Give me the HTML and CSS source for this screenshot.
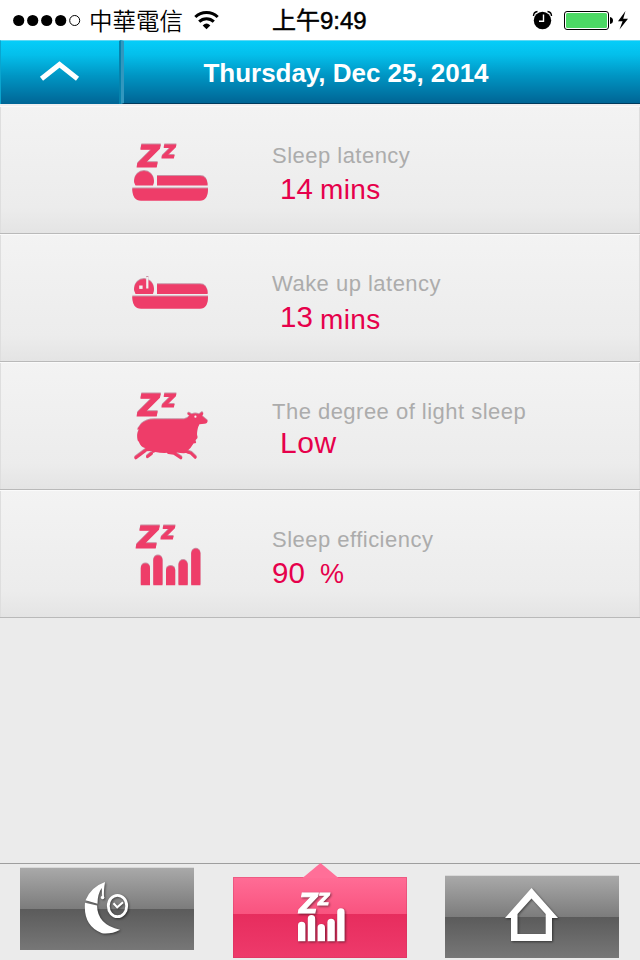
FILE: index.html
```html
<!DOCTYPE html>
<html lang="en">
<head>
    <meta charset="UTF-8">
    <meta name="viewport" content="width=device-width, initial-scale=1.0">
    <title>Sleep Report</title>
    <link rel="stylesheet" href="styles.css">
</head>
<body>

    <!-- Status bar -->
    <div class="status-bar">
        <div class="status-left">
            <svg class="signal" width="70" height="40" viewBox="0 0 70 40">
                <circle cx="5.7" cy="20.5" r="5.6"/>
                <circle cx="19.7" cy="20.5" r="5.6"/>
                <circle cx="33.7" cy="20.5" r="5.6"/>
                <circle cx="47.7" cy="20.5" r="5.6"/>
                <circle cx="61.7" cy="20.5" r="5" fill="none" stroke="#000" stroke-width="1"/>
            </svg>
            <span class="carrier" lang="zh-TW">中華電信</span>
            <svg width="26" height="40" viewBox="0 0 26 40" fill="none" stroke="#000" stroke-width="3">
                <path d="M1.3 17 A16 16 0 0 1 23.7 17"/>
                <path d="M5.2 21.6 A10.5 10.5 0 0 1 19.8 21.6"/>
                <path d="M8.7 25.4 Q12.5 21.8 16.3 25.4 L12.5 29.2 Z" fill="#000" stroke="none"/>
            </svg>
        </div>
        <div class="status-time" lang="zh-TW">上午9:49</div>
        <div class="status-right">
            <svg width="99" height="40" viewBox="-1 0 99 40">
                <circle cx="10.5" cy="20.5" r="8.7"/>
                <path d="M1.5 16 Q1.5 12 5.5 11.5 M15.5 11.5 Q19.5 12 19.5 16" fill="none" stroke="#000" stroke-width="1.4"/>
                <path d="M11.5 14.5 V21.3 H7" fill="none" stroke="#fff" stroke-width="1.4"/>
                <rect x="32.5" y="11.5" width="44" height="18" rx="2.5" fill="#fff" stroke="#000"/>
                <rect x="34" y="13" width="41" height="15" rx="1.5" fill="#4cd964"/>
                <path d="M78 17 Q81 17.5 81 20.5 Q81 23.5 78 24 Z"/>
                <path d="M93.5 11 L86 21.2 H90.6 L87.5 29.5 L96 18.8 H91.2 Z"/>
            </svg>
        </div>
    </div>

    <!-- Header -->
    <div class="header">
        <div class="header-button">
            <svg width="118" height="63" viewBox="0 0 118 63">
                <path d="M40.5 37.7 L58.5 23.5 L76.5 37.7" fill="none" stroke="#fff" stroke-width="5"/>
            </svg>
        </div>
        <h1>Thursday, Dec 25, 2014</h1>
    </div>

    <!-- Results -->
    <div class="row">
        <svg class="icon" width="100" height="127" viewBox="0 0 100 127">
            <text class="z-big" x="18" y="60.5">Z</text>
            <text class="z-small" x="42.5" y="51.5">Z</text>
            <path d="M15.5 79.5 Q14 77 14 75 A10 10 0 0 1 34 75 Q34 77 33 79.5 Z"/>
            <path d="M37 70 H80 Q87.5 70 87.7 79.5 H37 Z"/>
            <path d="M12.3 82.5 H88 Q88 94.7 80 94.7 H21 Q12.3 94.7 12.3 82.5 Z"/>
        </svg>
        <div class="info">
            <div class="label">Sleep latency</div>
            <div class="value"><span class="number indent">14</span><span class="unit">mins</span></div>
        </div>
    </div>
    <div class="row">
        <svg class="icon" width="100" height="127" viewBox="0 0 100 127">
            <path d="M15.5 60 Q14 57 14 55 A10 10 0 0 1 34 55 Q34 57 33 60 Z"/>
            <rect x="26.2" y="43" width="2.2" height="11.5" fill="#f0f0f0"/>
            <rect x="19.2" y="51.5" width="3.4" height="3.4" fill="#f0f0f0"/>
            <path d="M37 50.2 H80 Q87.5 50.2 87.7 60 H37 Z"/>
            <path d="M12.3 62.6 H88 Q88 74.8 80 74.8 H21 Q12.3 74.8 12.3 62.6 Z"/>
        </svg>
        <div class="info">
            <div class="label">Wake up latency</div>
            <div class="value"><span class="number indent">13</span><span class="unit low">mins</span></div>
        </div>
    </div>
    <div class="row">
        <svg class="icon" width="100" height="127" viewBox="0 0 100 127">
            <text class="z-big" x="18" y="53.5">Z</text>
            <text class="z-small" x="42.5" y="44.5">Z</text>
            <path d="M21 62 Q26 57 35 57.2 H64 Q68 56.5 69.5 53.5 L67.3 52.2 Q67 50.3 69 50.7 L71.7 52.3 Q75 50.8 79 52.3 L81.5 50.2 Q83.5 50 83.3 52 L82 54 L87.6 58.7 Q87.5 61.5 84.5 61.7 L79.5 62.3 Q77 66 77 73 L77.5 76 L75.3 78.5 Q76 80 76.2 81 L73.5 81.5 Q71 86 67.5 88.8 L68 90.8 Q63 91.7 57 90.5 L55 91.5 L52.5 90.3 Q43 91.8 35.5 90 L33 91 L31.5 89 L26.5 89.3 L25 86 Q20.5 85 19 80 L17.7 78.5 Q16.3 72 19 67.5 L17 67.5 Q19 65 21 62 Z"/>
            <path d="M25.5 88.5 L15.8 95.8 M31.5 91.5 L27.5 94.7 M48.5 90.5 L54 91.3 L60.8 95.8 M67.5 90 L71 91.2 L75.2 95.3" fill="none" stroke="#ee3d69" stroke-width="3" stroke-linecap="round"/>
            <circle cx="75.4" cy="54.7" r="1.1" fill="#f4f4f4"/>
        </svg>
        <div class="info">
            <div class="label">The degree of light sleep</div>
            <div class="value raised"><span class="word indent">Low</span></div>
        </div>
    </div>
    <div class="row">
        <svg class="icon" width="100" height="127" viewBox="0 0 100 127">
            <text class="z-big" x="17" y="57.5">Z</text>
            <text class="z-small" x="41.5" y="48.5">Z</text>
            <path d="M20.8 95.3 V78 A4.6 4.6 0 0 1 30 78 V95.3 Z"/>
            <path d="M33.3 95.3 V70 A4.6 4.6 0 0 1 42.5 70 V95.3 Z"/>
            <path d="M46 95.3 V80.5 A4.6 4.6 0 0 1 55.2 80.5 V95.3 Z"/>
            <path d="M58.5 95.3 V74.7 A4.6 4.6 0 0 1 67.7 74.7 V95.3 Z"/>
            <path d="M71.2 95.3 V63.4 A4.6 4.6 0 0 1 80.4 63.4 V95.3 Z"/>
        </svg>
        <div class="info">
            <div class="label">Sleep efficiency</div>
            <div class="value"><span class="number">90</span><span class="unit percent">%</span></div>
        </div>
    </div>

    <!-- Tab bar -->
    <div class="tab-bar">
        <div class="tab tab-night">
            <svg width="174" height="82" viewBox="0 0 174 82">
                <path d="M65.5 32.2 Q71 19 85 14 Q83.5 23 84 29 L82.2 28.5 L81.7 20 Q77.5 26 77.5 35.8 Z"/>
                <circle cx="82.6" cy="29.5" r="1.8"/>
                <path d="M65 34.8 L77 37.5 Q77.5 57 100 61.7 Q91 66.5 82 65.3 Q63 58 65 34.8 Z"/>
                <ellipse cx="97.5" cy="38" rx="9.2" ry="10.7" fill="none" stroke="#fff" stroke-width="2.8"/>
                <path d="M93.5 35.3 L97.2 39.3 L103 34.3" fill="none" stroke="#fff" stroke-width="2"/>
            </svg>
        </div>
        <div class="tab tab-stats">
            <svg width="174" height="81" viewBox="0 0 174 81">
                <text class="z-big" x="66" y="35.5">Z</text>
                <text class="z-small" x="85" y="27.5">Z</text>
                <path d="M65 64.3 V48.5 A3.7 3.7 0 0 1 72.4 48.5 V64.3 Z"/>
                <path d="M74.8 64.3 V41.7 A3.7 3.7 0 0 1 82.2 41.7 V64.3 Z"/>
                <path d="M84.6 64.3 V50.8 A3.7 3.7 0 0 1 92 50.8 V64.3 Z"/>
                <path d="M94.4 64.3 V45.5 A3.7 3.7 0 0 1 101.8 45.5 V64.3 Z"/>
                <path d="M104.2 64.3 V35 A3.7 3.7 0 0 1 111.6 35 V64.3 Z"/>
            </svg>
        </div>
        <div class="tab tab-home">
            <svg width="174" height="82" viewBox="0 0 174 82">
                <path fill-rule="evenodd" d="M86.5 12 L113 42 H107 V65 H66 V42 H60 Z M86.5 22.5 L72.5 38 V58 H100.7 V38 Z"/>
            </svg>
        </div>
    </div>

</body>
</html>
```

FILE: styles.css
```css
* {
    box-sizing: border-box;
}
body {
    margin: 0;
    width: 640px;
    height: 960px;
    display: flex;
    flex-direction: column;
    background: #ebebeb;
    font-family: "Liberation Sans", "Noto Sans CJK TC", sans-serif;
    overflow: hidden;
}
svg {
    display: block;
    flex: none;
}
/* Status bar */
.status-bar {
    height: 40px;
    flex: none;
    display: grid;
    grid-template-columns: 272px 1fr 109px;
    background: #fff;
    color: #000;
    line-height: 40px;
    white-space: nowrap;
}
.status-left {
    display: flex;
    padding-left: 13px;
}
.carrier {
    width: 94px;
    margin: 0 11px 0 6px;
    font-family: "Noto Sans CJK TC", sans-serif;
    font-size: 23.5px;
    font-weight: 350;
}
.status-time {
    font-family: "Liberation Sans", "Noto Sans CJK TC", sans-serif;
    font-size: 24px;
    font-weight: 400;
    -webkit-text-stroke: 0.5px #000;
    line-height: 42px;
}
/* Header */
.header {
    height: 66px;
    flex: none;
    display: flex;
    color: #fff;
    border-bottom: 2px solid #f0eff0;
}
.header-button,
.header h1 {
    background: linear-gradient(#05cdf9, #04bfeb 22%, #0096c4 55%, #006595);
    border-top: 1px solid #5fd9f5;
}
.header-button {
    width: 121px;
    border-right: 2px solid #0583ad;
    border-left: 1px solid #0aa5cf;
}
.header h1 {
    flex: 1;
    margin: 0;
    padding-left: 79.5px;
    border-left: 3px solid #3197be;
    border-bottom: 1px solid #003a5c;
    font-size: 26px;
    line-height: 64px;
    letter-spacing: -0.03px;
}
/* Result rows */
.row {
    height: 128px;
    flex: none;
    display: flex;
    padding-left: 120px;
    background: linear-gradient(#f3f3f3, #ececec 80%, #e4e4e4);
    border-bottom: 1px solid #b9b9b9;
    box-shadow: inset 0 1px #fafafa, inset 1px 0 #dedede, inset -1px 0 #dedede;
}
.icon {
    fill: #ee3d69;
    margin-right: 52px;
    filter: drop-shadow(0 -1px 0 rgba(150, 30, 70, 0.45));
}
.z-big,
.z-small {
    font-family: "DejaVu Sans", sans-serif;
    font-weight: bold;
    font-style: italic;
    stroke-width: 1px;
}
.icon .z-big,
.icon .z-small {
    stroke: #ee3d69;
}
.icon .z-big {
    font-size: 30px;
}
.icon .z-small {
    font-size: 18px;
}
.info {
    padding-top: 37px;
    white-space: nowrap;
}
.label {
    color: #acacac;
    font-size: 22px;
    line-height: 26px;
    letter-spacing: 0.48px;
}
.value {
    display: flex;
    align-items: baseline;
    margin-top: 3px;
    color: #e6004b;
    line-height: 34px;
}
.raised {
    margin-top: 1px;
}
.number {
    width: 48px;
    font-size: 29.5px;
}
.word {
    font-size: 30px;
    letter-spacing: 0.6px;
}
.indent {
    padding-left: 8px;
}
.unit {
    font-size: 28px;
    letter-spacing: 0.4px;
}
/* Unit that hangs a little under its number */
.low {
    transform: translateY(2px);
}
.percent {
    font-size: 27px;
}
/* Tab bar */
.tab-bar {
    margin-top: auto;
    height: 97px;
    flex: none;
    display: flex;
    align-items: flex-start;
    justify-content: space-between;
    padding: 4px 21px 0 20px;
    border-top: 1px solid #9e9e9e;
}
.tab {
    width: 174px;
    height: 82px;
    background: linear-gradient(#a9a9a9, #7c7c7c 50%, #5b5b5b 50%, #777);
    box-shadow: 0 -1px #d9d9d9;
    fill: #fff;
}
.tab svg {
    filter: drop-shadow(1px 1px 1px rgba(0, 0, 0, 0.5));
}
.tab-stats {
    position: relative;
    height: 81px;
    margin-top: 9px;
    background: linear-gradient(#ff6d96, #f9537f 46%, #e72d5e 46%, #ee3a6b);
    box-shadow: inset 0 0 0 1px rgba(200, 50, 90, 0.3);
}
/* Pointer above the active tab */
.tab-stats::before {
    content: "";
    position: absolute;
    left: 70px;
    top: -14px;
    width: 36px;
    height: 15px;
    background: #ff6f98;
    clip-path: polygon(50% 0, 100% 100%, 0 100%);
}
.tab-stats .z-big,
.tab-stats .z-small {
    stroke: #fff;
}
.tab-stats .z-big {
    font-size: 26px;
}
.tab-stats .z-small {
    font-size: 16px;
}
.tab-home {
    margin-top: 8px;
}
```
